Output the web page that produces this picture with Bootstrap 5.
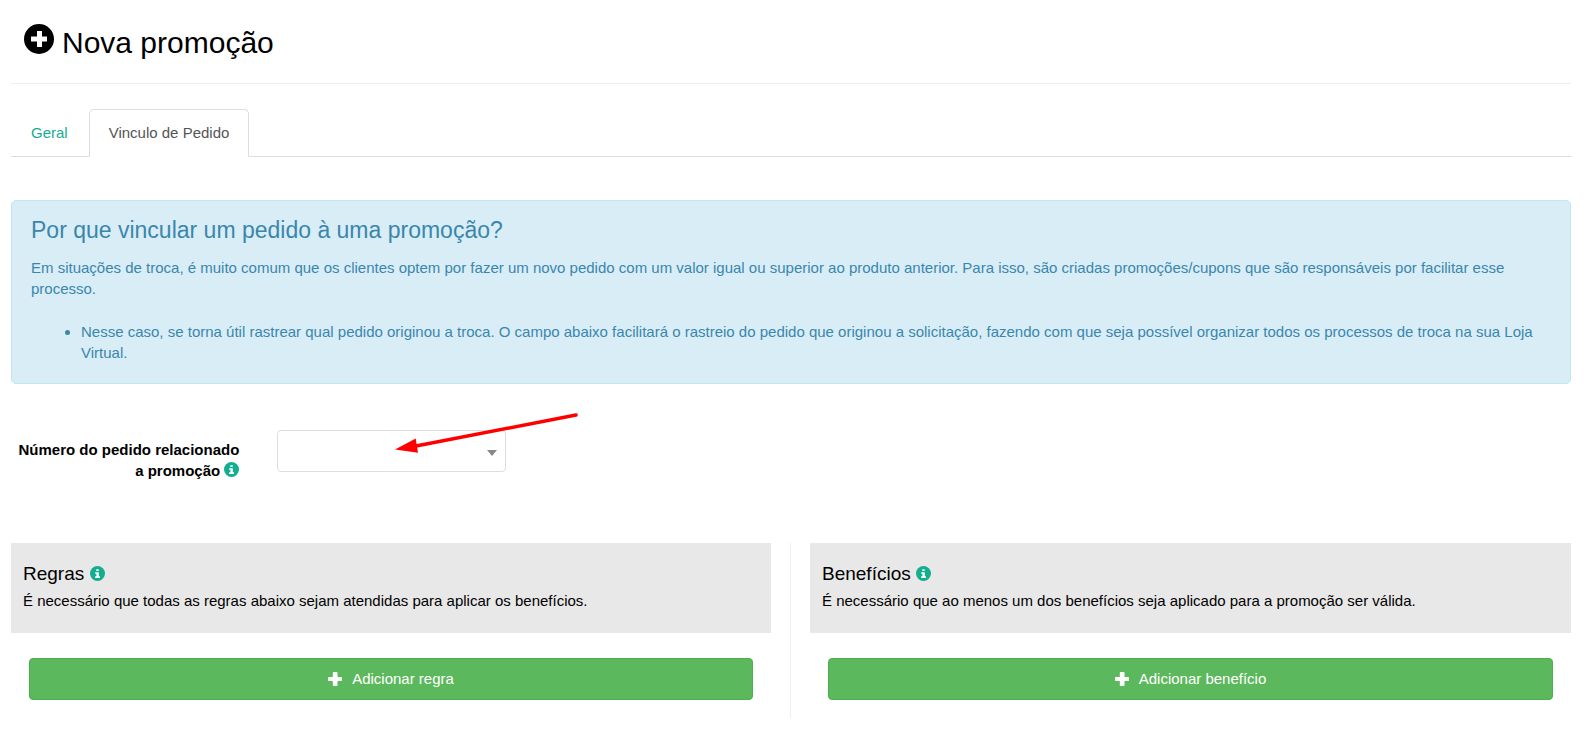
<!DOCTYPE html>
<html lang="pt-BR">
<head>
<meta charset="utf-8">
<meta name="viewport" content="width=device-width, initial-scale=1">
<title>Nova promoção</title>
<link href="https://cdn.jsdelivr.net/npm/bootstrap@5.3.0/dist/css/bootstrap.min.css" rel="stylesheet">
<style>
  body { font-family: "Liberation Sans", Arial, sans-serif; font-size: 15px; line-height: 21px; color: #000; background: #fff; }
  .page { padding: 0 13px 0 11px; }
  .page-title { padding: 23px 12px 21px; border-bottom: 1px solid #eee; margin-bottom: 25px; }
  .page-title h1 { font-size: 30px; line-height: 39px; margin: 0; }
  .title-icon { width: 30px; height: 30px; margin: 0 8px 8px 1px; }
  .nav-tabs { --bs-nav-tabs-border-color: #ddd; --bs-nav-tabs-border-radius: 5px; margin-bottom: 43px; }
  .nav-tabs .nav-link { color: #18ab8f; margin-right: 1px; padding: 12px 19px 13px; }
  .nav-tabs .nav-link.active { color: #555; border-color: #ddd #ddd #fff; }
  .alert-why { background: #d9edf7; border: 1px solid #bce8f1; border-radius: 5px; color: #3a87ad; padding: 14px 19px 20px; margin-bottom: 46px; }
  .alert-why h2 { font-size: 23px; line-height: 30px; margin-bottom: 12px; }
  .alert-why ul { padding-left: 50px; margin: 22px 0 0; }
  .row { --bs-gutter-x: 38px; }
  .order-field { margin-bottom: 62px; }
  .order-field label { font-weight: 700; padding-top: 9px; }
  .info-icon { width: 15px; height: 15px; vertical-align: -1px; }
  .order-field .form-select { height: 42px; border: 1px solid #ddd; border-radius: 4px; background: #fff url("data:image/svg+xml,%3Csvg xmlns='http://www.w3.org/2000/svg' viewBox='0 0 10 6'%3E%3Cpath fill='%23888' d='M0 0h10L5 6z'/%3E%3C/svg%3E") no-repeat right 8px top 19px / 10px 6px; }
  .pointer-arrow { position: absolute; left: 118px; top: -21px; width: 190px; height: 50px; pointer-events: none; }
  .divided { border-right: 1px solid #eee; }
  .panel-head { background: #e8e8e8; padding: 19px 12px 22px; margin-bottom: 25px; }
  .panel-head h2 { font-size: 19px; line-height: 24px; margin-bottom: 4px; }
  .panel-action { padding: 0 18px 18px; }
  .btn-add { --bs-btn-bg: #5cb85c; --bs-btn-border-color: #4cae4c; --bs-btn-color: #fff; --bs-btn-hover-bg: #4cae4c; --bs-btn-hover-color: #fff; font-size: 15px; line-height: 20px; padding: 10px; border-radius: 4px; gap: 10px; }
  .plus-icon { width: 14px; height: 14px; }
</style>
</head>
<body>
<svg class="d-none" aria-hidden="true">
  <symbol id="info" viewBox="0 0 15 15">
    <circle cx="7.500" cy="7.500" r="7.500" fill="#13ad8f"/>
    <path fill="#fff" d="M6.300 3.200h2.400v1.900H6.300zM5.200 6.200h3.600v4h1.100v1.700H5.200v-1.700h1.200V7.800H5.200z"/>
  </symbol>
  <symbol id="plus" viewBox="0 0 14 14">
    <path fill="currentColor" d="M5.500 0h3.300q.7 0 .7.700V5h3.800q.7 0 .7.700v2.600q0 .7-.7.700H9.500v4.300q0 .7-.7.700H5.500q-.7 0-.7-.7V9H.7Q0 9 0 8.300V5.700Q0 5 .7 5h4.100V.7q0-.7.700-.7z"/>
  </symbol>
</svg>
<main class="page">
  <header class="page-title">
    <h1 class="d-flex align-items-center fw-normal">
      <svg class="title-icon" viewBox="0 0 30 30" aria-hidden="true"><circle cx="15" cy="15" r="15"/><path fill="#fff" d="M13 7h5v5.500h5v5h-5V23h-5v-5.500H7v-5h6z"/></svg>
      <span>Nova promoção</span>
    </h1>
  </header>

  <ul class="nav nav-tabs">
    <li class="nav-item"><a class="nav-link" href="#geral">Geral</a></li>
    <li class="nav-item"><a class="nav-link active" aria-current="page" href="#vinculo">Vinculo de Pedido</a></li>
  </ul>

  <section class="alert alert-why">
    <h2 class="fw-normal">Por que vincular um pedido à uma promoção?</h2>
    <p class="mb-0">Em situações de troca, é muito comum que os clientes optem por fazer um novo pedido com um valor igual ou superior ao produto anterior. Para isso, são criadas promoções/cupons que são responsáveis por facilitar esse processo.</p>
    <ul>
      <li>Nesse caso, se torna útil rastrear qual pedido originou a troca. O campo abaixo facilitará o rastreio do pedido que originou a solicitação, fazendo com que seja possível organizar todos os processos de troca na sua Loja Virtual.</li>
    </ul>
  </section>

  <div class="row order-field">
    <label class="col-2 text-end" for="pedido">Número do pedido relacionado a promoção <svg class="info-icon" aria-hidden="true"><use href="#info"/></svg></label>
    <div class="col-2">
      <div class="position-relative">
        <select class="form-select" id="pedido"><option value=""></option></select>
        <svg class="pointer-arrow" viewBox="0 0 190 50" aria-hidden="true">
          <path d="M21 37L181 6" stroke="#f00" stroke-width="3.500" stroke-linecap="round" fill="none"/>
          <path d="M0 40.500L20.700 29.500L23 43.800z" fill="#f00"/>
        </svg>
      </div>
    </div>
  </div>

  <div class="row">
    <section class="col-6 divided">
      <div class="panel-head">
        <h2 class="fw-normal">Regras <svg class="info-icon" aria-hidden="true"><use href="#info"/></svg></h2>
        <p class="mb-0">É necessário que todas as regras abaixo sejam atendidas para aplicar os benefícios.</p>
      </div>
      <div class="panel-action">
        <button type="button" class="btn btn-add w-100 d-flex justify-content-center align-items-center"><svg class="plus-icon" aria-hidden="true"><use href="#plus"/></svg><span>Adicionar regra</span></button>
      </div>
    </section>
    <section class="col-6">
      <div class="panel-head">
        <h2 class="fw-normal">Benefícios <svg class="info-icon" aria-hidden="true"><use href="#info"/></svg></h2>
        <p class="mb-0">É necessário que ao menos um dos benefícios seja aplicado para a promoção ser válida.</p>
      </div>
      <div class="panel-action">
        <button type="button" class="btn btn-add w-100 d-flex justify-content-center align-items-center"><svg class="plus-icon" aria-hidden="true"><use href="#plus"/></svg><span>Adicionar benefício</span></button>
      </div>
    </section>
  </div>
</main>
<script src="https://cdn.jsdelivr.net/npm/bootstrap@5.3.0/dist/js/bootstrap.bundle.min.js"></script>
</body>
</html>
